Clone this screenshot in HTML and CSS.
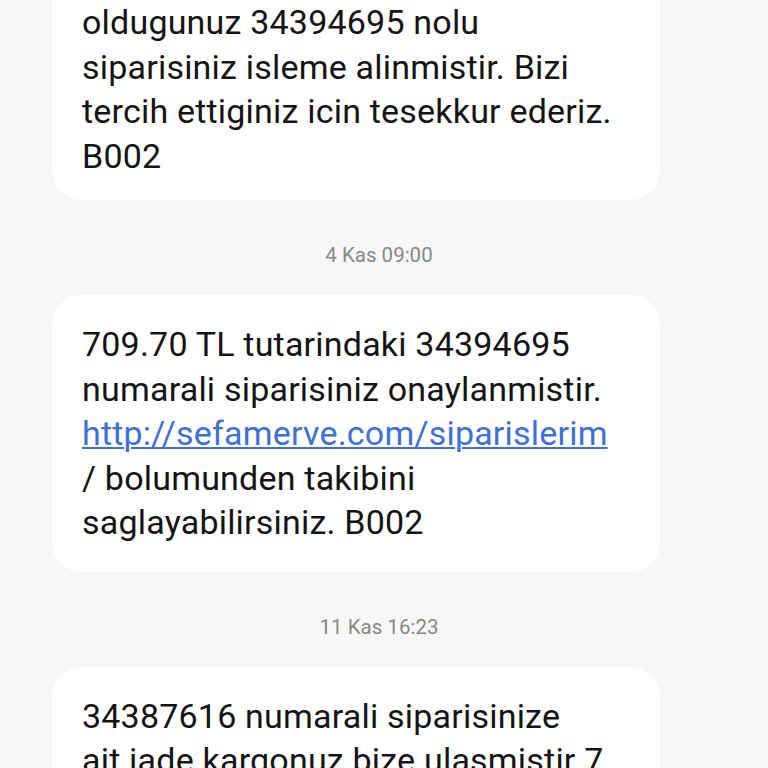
FILE: index.html
```html
<!DOCTYPE html>
<html lang="tr">
<head>
<meta charset="utf-8">
<title>Mesajlar</title>
<link rel="stylesheet" href="styles.css">
</head>
<body>
<main class="thread">
  <div class="bubble bubble-first">oldugunuz 34394695 nolu<br>siparisiniz isleme alinmistir. Bizi<br>tercih ettiginiz icin tesekkur ederiz.<br>B002</div>
  <div class="stamp">4 Kas 09:00</div>
  <div class="bubble">709.70 TL tutarindaki 34394695<br>numarali siparisiniz onaylanmistir.<br><a class="link" href="#">http://sefamerve.com/siparislerim</a><br>/ bolumunden takibini<br>saglayabilirsiniz. B002</div>
  <div class="stamp">11 Kas 16:23</div>
  <div class="bubble">34387616 numarali siparisinize<br>ait iade kargonuz bize ulasmistir 7</div>
</main>
</body>
</html>
```
FILE: styles.css
```css
html, body {
  margin: 0;
  padding: 0;
  background: #f7f7f7;
  height: 100%;
  overflow: hidden;
}
.thread {
  display: flex;
  flex-direction: column;
  align-items: flex-start;
  padding-left: 52px;
}
.bubble {
  box-sizing: border-box;
  width: 608px;
  background: #ffffff;
  border-radius: 30px;
  padding: 27px 20px 27px 30px;
  font-family: Roboto, "Noto Sans", sans-serif;
  font-size: 34px;
  line-height: 44.5px;
  color: #141414;
  letter-spacing: 0.2px;
  white-space: nowrap;
}
.bubble-first {
  border-radius: 0 0 30px 30px;
  padding-top: 0;
  padding-bottom: 22px;
}
.link {
  color: #3f6fd8;
  text-decoration: underline;
  text-underline-offset: 2px;
  text-decoration-thickness: 2px;
}
.stamp {
  align-self: stretch;
  box-sizing: border-box;
  text-align: center;
  padding-right: 62px;
  margin: 43px 0 28px 0;
  font-family: Roboto, "Noto Sans", sans-serif;
  font-size: 20.5px;
  line-height: 24px;
  color: #888888;
}
```
